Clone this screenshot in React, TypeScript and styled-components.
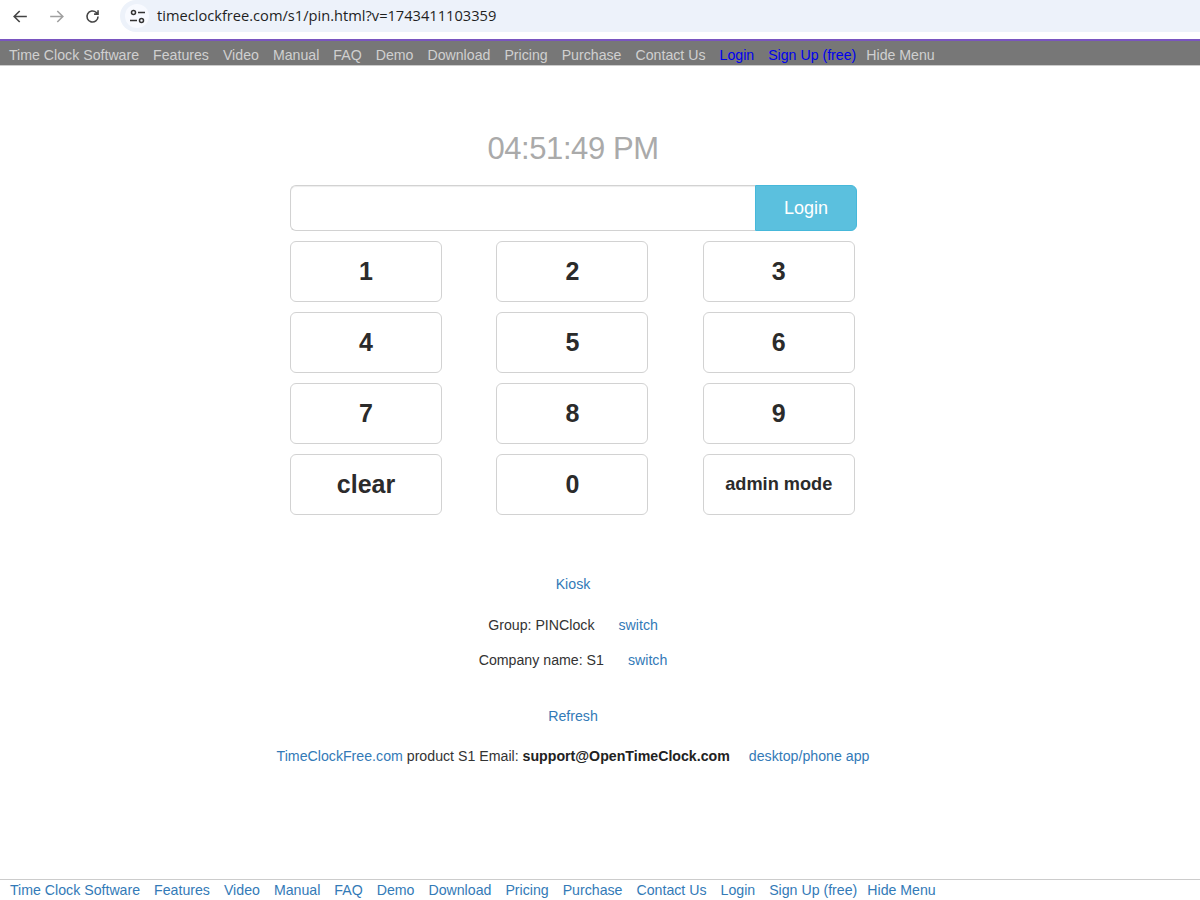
import styled, { createGlobalStyle } from "styled-components";

const GlobalStyle = createGlobalStyle`
  html, body {
    margin: 0;
    padding: 0;
    height: 900px;
    overflow: hidden;
    background: #fff;
    font-family: "Liberation Sans", Arial, sans-serif;
  }
`;

const Page = styled.div`
  display: flex;
  flex-direction: column;
  width: 1200px;
  height: 900px;
  overflow: hidden;
`;

const BrowserBar = styled.div`
  display: flex;
  align-items: flex-start;
  height: 39px;
  flex-shrink: 0;
  background: #fff;
`;

const NavIcons = styled.div`
  display: flex;
  width: 120px;
  height: 32px;
  padding-left: 11px;
  gap: 17px;
  align-items: center;
  box-sizing: border-box;
`;

const IconSlot = styled.svg`
  width: 19px;
  height: 19px;
  flex-shrink: 0;
`;

const UrlPill = styled.div`
  flex: 1;
  display: flex;
  align-items: center;
  gap: 8px;
  height: 32px;
  padding-left: 5px;
  background: #edf2fa;
  border-radius: 16px 0 0 16px;
`;

const SiteChip = styled.div`
  display: flex;
  align-items: center;
  justify-content: center;
  width: 24px;
  height: 24px;
  border-radius: 50%;
  background: #f8faff;
`;

const UrlText = styled.span`
  font-family: "Open Sans", "Noto Sans", sans-serif;
  font-size: 14.65px;
  line-height: 30px;
  padding-bottom: 2px;
  color: #1f1f1f;
`;

const Menu = styled.nav<{ $top?: boolean }>`
  display: flex;
  flex-shrink: 0;
  gap: 14px;
  padding-left: ${({ $top }) => ($top ? "9px" : "10px")};
  height: ${({ $top }) => ($top ? "24px" : "20px")};
  align-items: ${({ $top }) => ($top ? "flex-end" : "flex-start")};
  background: ${({ $top }) => ($top ? "#777" : "#fff")};
  border-top: ${({ $top }) => ($top ? "2px solid #7a55c0" : "1px solid #ccc")};
  box-shadow: ${({ $top }) => ($top ? "0 1px 0 #ccc" : "none")};
  font-size: 14.16px;
  line-height: 20px;
`;

const MenuLink = styled.a<{ $color: string; $tight?: boolean }>`
  color: ${({ $color }) => $color};
  white-space: nowrap;
  margin-left: ${({ $tight }) => ($tight ? "-4px" : "0")};
`;

const Main = styled.main`
  flex: 1;
  width: 1146px;
  display: flex;
  flex-direction: column;
  align-items: center;
`;

const Clock = styled.div`
  margin-top: 66px;
  font-size: 31px;
  letter-spacing: -0.42px;
  line-height: 36px;
  color: #aaa;
`;

const LoginRow = styled.div`
  display: flex;
  align-self: flex-start;
  margin: 18px 0 0 290px;
  width: 567px;
  height: 46px;
`;

const PinInput = styled.div`
  flex: 1;
  box-sizing: border-box;
  border: 1px solid #d2d2d2;
  border-right: none;
  border-radius: 6px 0 0 6px;
  box-shadow: inset 0 1px 1px rgba(0, 0, 0, 0.075);
`;

const LoginButton = styled.button`
  width: 102px;
  border: 1px solid #46b8da;
  border-radius: 0 6px 6px 0;
  background: #5bc0de;
  color: #fff;
  font: 18px "Liberation Sans", Arial, sans-serif;
  padding: 0;
`;

const Keypad = styled.div`
  display: grid;
  align-self: flex-start;
  margin: 10px 0 0 290px;
  grid-template-columns: 152px 152px 152px;
  grid-auto-rows: 61px;
  column-gap: 54.4px;
  row-gap: 10px;
`;

const Key = styled.button<{ $small?: boolean }>`
  background: #fff;
  border: 1px solid #d2d2d2;
  border-radius: 6px;
  color: #2b2b2b;
  font: bold ${({ $small }) => ($small ? "18.2px" : "25px")} "Liberation Sans", Arial, sans-serif;
  padding: 0;
`;

const InfoLine = styled.div<{ $top: number }>`
  display: flex;
  justify-content: center;
  gap: 24px;
  margin-top: ${({ $top }) => $top}px;
  font-size: 14.18px;
  line-height: 20px;
  color: #333;
`;

const BlueLink = styled.a`
  color: #337ab7;
`;

const FooterLine = styled(InfoLine)`
  gap: 19px;
`;

const StrongEmail = styled.b`
  color: #222;
`;

const menuItems = [
  "Time Clock Software",
  "Features",
  "Video",
  "Manual",
  "FAQ",
  "Demo",
  "Download",
  "Pricing",
  "Purchase",
  "Contact Us",
  "Login",
  "Sign Up (free)",
  "Hide Menu",
];

const keys = ["1", "2", "3", "4", "5", "6", "7", "8", "9", "clear", "0", "admin mode"];

const topColor = (label: string) =>
  label === "Login" || label.startsWith("Sign Up") ? "#0000ee" : "#d0d0d0";

export default function App() {
  return (
    <Page>
      <GlobalStyle />
      <BrowserBar>
        <NavIcons>
          <IconSlot viewBox="0 0 24 24" fill="none" stroke="#444" strokeWidth="2">
            <path d="M20 12H5M11 5l-7 7 7 7" />
          </IconSlot>
          <IconSlot viewBox="0 0 24 24" fill="none" stroke="#a0a0a0" strokeWidth="2">
            <path d="M4 12h15M13 5l7 7-7 7" />
          </IconSlot>
          <IconSlot viewBox="0 0 24 24" fill="none" stroke="#444" strokeWidth="2">
            <path d="M19 12a7 7 0 1 1-2.200-5.100L19 9M19 4v5h-5" />
          </IconSlot>
        </NavIcons>
        <UrlPill>
          <SiteChip>
            <IconSlot viewBox="0 0 19 19" fill="none" stroke="#333" strokeWidth="1.5">
              <circle cx="5.500" cy="5.500" r="2" />
              <path d="M10 5.500h7M2 13.500h7" />
              <circle cx="13.500" cy="13.500" r="2" />
            </IconSlot>
          </SiteChip>
          <UrlText>timeclockfree.com/s1/pin.html?v=1743411103359</UrlText>
        </UrlPill>
      </BrowserBar>
      <Menu $top>
        {menuItems.map((label) => (
          <MenuLink key={label} $color={topColor(label)} $tight={label === "Hide Menu"}>
            {label}
          </MenuLink>
        ))}
      </Menu>
      <Main>
        <Clock>04:51:49 PM</Clock>
        <LoginRow>
          <PinInput />
          <LoginButton>Login</LoginButton>
        </LoginRow>
        <Keypad>
          {keys.map((k) => (
            <Key key={k} $small={k === "admin mode"}>
              {k}
            </Key>
          ))}
        </Keypad>
        <InfoLine $top={59}>
          <BlueLink>Kiosk</BlueLink>
        </InfoLine>
        <InfoLine $top={21}>
          <span>Group: PINClock</span>
          <BlueLink>switch</BlueLink>
        </InfoLine>
        <InfoLine $top={15}>
          <span>Company name: S1</span>
          <BlueLink>switch</BlueLink>
        </InfoLine>
        <InfoLine $top={36}>
          <BlueLink>Refresh</BlueLink>
        </InfoLine>
        <FooterLine $top={20}>
          <span>
            <BlueLink>TimeClockFree.com</BlueLink> product S1 Email:{" "}
            <StrongEmail>support@OpenTimeClock.com</StrongEmail>
          </span>
          <BlueLink>desktop/phone app</BlueLink>
        </FooterLine>
      </Main>
      <Menu>
        {menuItems.map((label) => (
          <MenuLink key={label} $color="#337ab7" $tight={label === "Hide Menu"}>
            {label}
          </MenuLink>
        ))}
      </Menu>
    </Page>
  );
}
